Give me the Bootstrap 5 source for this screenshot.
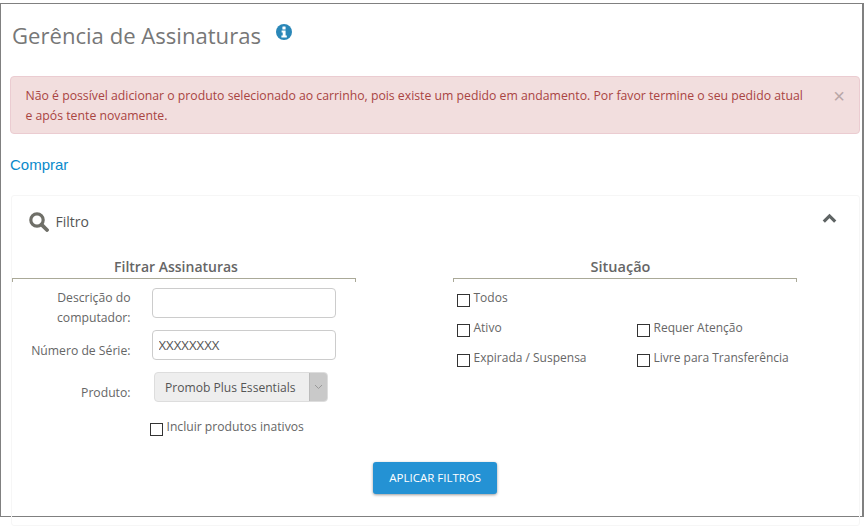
<!DOCTYPE html>
<html lang="pt-BR">

<head>
  <meta charset="UTF-8">
  <meta name="viewport" content="width=device-width, initial-scale=1.0">
  <title>Gerência de Assinaturas</title>
  <link href="https://cdn.jsdelivr.net/npm/bootstrap@5.3.0/dist/css/bootstrap.min.css" rel="stylesheet">
  <style>
    html, body { height: 100%; overflow: hidden; }
    body { font-family: "Open Sans", "Noto Sans", sans-serif; font-size: 12.2px; color: #666; background: #fff; }

    #frame { width: 864px; height: 513.5px; margin-top: 3px; border: 1.5px solid #808080; border-right-width: 2px; }

    .page-head { height: 72px; padding: 13px 0 0 11px; }
    .page-title { font-family: inherit; font-size: 22.1px; font-weight: 400; line-height: 36px; color: #777; margin: 0; }
    .info-ico { width: 16px; height: 16px; margin: 7px 0 0 15px; }

    .warn-box { margin: 0 2px 0 8.5px; height: 58px; padding: 9px 50px 0 15px; background: #f2dede; border-color: #ebccd1; color: #a94442; font-size: 12.25px; line-height: 20px; border-radius: 4px; }
    .warn-x { top: 9px; right: 14px; font-size: 20px; line-height: 20px; color: #b9a6a7; font-family: "Liberation Sans", sans-serif; }

    .buy-link { margin: 21px 0 0 9px; height: 20px; line-height: 20px; font-family: "Liberation Sans", sans-serif; font-size: 15px; color: #0a8acb; text-decoration: none; display: block; }

    .filter-card { margin: 20px 2px 0 9.5px; height: 331px; border: 1px solid #f6f6f6; border-radius: 3px; }
    .filter-head { height: 56px; padding: 16px 22px 0 17px; color: #555; font-size: 14px; }
    .filter-head svg.lens { width: 20px; height: 20px; margin-right: 7px; }
    .filter-head svg.chev { width: 15px; height: 11px; margin-top: 1px; }
    .filter-name { line-height: 20px; }

    .group-wrap { gap: 97px; }
    .group-title { width: 344px; height: 27px; text-align: center; font-size: 14px; font-weight: 600; line-height: 20px; color: #666; padding-top: 5px; border-bottom: 1px solid #aaa998; position: relative; }
    .group-title::before, .group-title::after { content: ""; position: absolute; bottom: -4px; width: 1px; height: 4px; background: #aaa998; }
    .group-title::before { left: 0; }
    .group-title::after { right: 0; }
    .title-left { padding-right: 15px; }
    .title-right { padding-right: 8px; font-size: 14.5px; }

    .form-line { display: flex; height: 42px; }
    .field-label { width: 119px; text-align: right; line-height: 20px; font-size: 12.2px; color: #666; margin-right: 21px; }
    .label-low { padding-top: 11px; }
    .field-input { width: 184px; height: 30px; border: 1px solid #ccc; border-radius: 4px; padding: 0 6px; font-size: 13.2px; font-family: inherit; color: #555; box-shadow: none; }
    .fake-select { margin-left: 2px; width: 174px; height: 30px; background: #eee; border: 1px solid #ddd; border-radius: 4px; color: #555; font-size: 12.1px; line-height: 30px; padding-left: 10.5px; overflow: hidden; }
    .fake-arrow { width: 18px; height: 30px; margin-top: -1px; background: #c9c9c9; border-left: 1px solid #bbb; }
    .fake-arrow svg { width: 9px; height: 6px; }
    .first-line { margin-top: 9px; }

    .sq-check { appearance: none; width: 13px; height: 13px; margin: 5px 4px 0 0; border: 1px solid #333; border-radius: 0; background: #fff; flex: none; }
    .check-item { display: flex; align-items: flex-start; font-size: 12px; line-height: 18px; color: #666; margin: 0; }
    .check-inactive { margin: 4px 0 0 138px; font-size: 12.15px; }
    .check-grid { display: grid; grid-template-columns: 180px 1fr; grid-auto-rows: 30px; padding: 10px 0 0 4px; }

    .btn-row { margin-top: 26px; }
    .apply-btn { width: 124px; height: 32px; background: #2492d4; border: 0; border-radius: 3px; color: #fff; font-size: 11.5px; padding: 0; box-shadow: 0 1px 3px rgba(0,0,0,.4); text-transform: uppercase; }
  </style>
</head>

<body>
  <div id="frame">
    <div class="page-head d-flex align-items-start">
      <h1 class="page-title">Gerência de Assinaturas</h1>
      <svg class="info-ico" viewBox="0 0 16 16">
        <circle cx="8" cy="8" r="8" fill="#2a87b8"/>
        <rect x="6.4" y="2.6" width="3.2" height="2.8" rx=".5" fill="#fff"/>
        <path d="M5.6 6.6h4v5h1.2v2H5.4v-2h1.3V8.5H5.6z" fill="#fff"/>
      </svg>
    </div>

    <div class="alert alert-danger warn-box position-relative mb-0" role="alert">
      Não é possível adicionar o produto selecionado ao carrinho, pois existe um pedido em andamento. Por favor termine o seu pedido atual<br>e após tente novamente.
      <span class="warn-x position-absolute">×</span>
    </div>

    <a class="buy-link" href="#">Comprar</a>

    <div class="filter-card">
      <div class="filter-head d-flex justify-content-between align-items-start">
        <div class="d-flex align-items-center">
          <svg class="lens" viewBox="0 0 20 20">
            <circle cx="8" cy="8" r="6.2" fill="none" stroke="#6f6f68" stroke-width="3.2"/>
            <path d="M12.6 12.6l5.4 5.4" stroke="#6f6f68" stroke-width="3.8" stroke-linecap="round"/>
          </svg>
          <span class="filter-name">Filtro</span>
        </div>
        <svg class="chev" viewBox="0 0 15 11">
          <path d="M1.8 8.6l5.7-5.7 5.7 5.7" fill="none" stroke="#5f6464" stroke-width="3.2"/>
        </svg>
      </div>

      <div class="d-flex group-wrap">
        <div>
          <div class="group-title title-left">Filtrar Assinaturas</div>
          <div class="form-line first-line">
            <div class="field-label">Descrição do computador:</div>
            <input class="field-input" type="text">
          </div>
          <div class="form-line">
            <div class="field-label label-low">Número de Série:</div>
            <input class="field-input" type="text" value="XXXXXXXX">
          </div>
          <div class="form-line">
            <div class="field-label label-low">Produto:</div>
            <div class="fake-select d-flex justify-content-between">
              <span>Promob Plus Essentials</span>
              <span class="fake-arrow d-flex align-items-center justify-content-center">
                <svg viewBox="0 0 9 6"><path d="M1 1l3.5 3.5L8 1" fill="none" stroke="#999"/></svg>
              </span>
            </div>
          </div>
          <label class="check-item check-inactive"><input class="sq-check" type="checkbox">Incluir produtos inativos</label>
        </div>

        <div>
          <div class="group-title title-right">Situação</div>
          <div class="check-grid">
            <label class="check-item"><input class="sq-check" type="checkbox">Todos</label>
            <span></span>
            <label class="check-item"><input class="sq-check" type="checkbox">Ativo</label>
            <label class="check-item"><input class="sq-check" type="checkbox">Requer Atenção</label>
            <label class="check-item"><input class="sq-check" type="checkbox">Expirada / Suspensa</label>
            <label class="check-item"><input class="sq-check" type="checkbox">Livre para Transferência</label>
          </div>
        </div>
      </div>

      <div class="text-center btn-row">
        <button class="btn apply-btn" type="button">Aplicar Filtros</button>
      </div>
    </div>
  </div>

  <script src="https://cdn.jsdelivr.net/npm/bootstrap@5.3.0/dist/js/bootstrap.bundle.min.js"></script>
</body>

</html>
